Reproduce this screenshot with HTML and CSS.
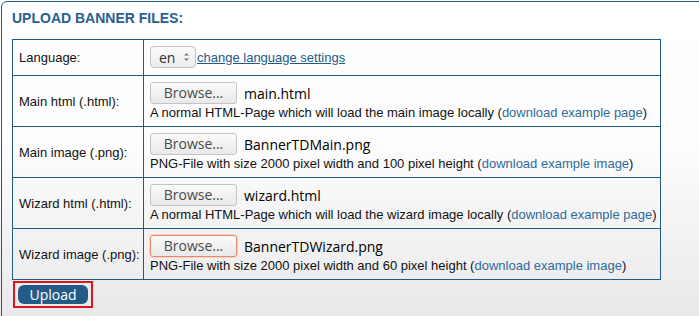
FILE: index.html
```html
<!DOCTYPE html>
<html lang="en">
<head>
  <meta charset="UTF-8" />
  <title>Upload Banner Files</title>
  <link rel="stylesheet" href="styles.css">
</head>
<body>
  <div class="panel">
    <h2 class="panel-title">UPLOAD BANNER FILES:</h2>
    <form id="uploadForm">
      <table class="upload-table">
        <colgroup>
          <col class="col-label">
          <col class="col-field">
        </colgroup>
        <tr class="row-lang">
          <td class="label">Language:</td>
          <td class="field">
            <div class="lang-line">
              <span class="lang-select">en
                <svg class="spin" width="7" height="12" viewBox="0 0 7 12">
                  <path d="M1 4.5 L3.5 2 L6 4.5 Z M1 7.5 L3.5 10 L6 7.5 Z" fill="#777"/>
                </svg>
              </span><a href="#" class="lang-link">change language settings</a>
            </div>
          </td>
        </tr>
        <tr>
          <td class="label">Main html (.html):</td>
          <td class="field">
            <div class="file-line"><button type="button" class="browse">Browse...</button><span class="file-name">main.html</span></div>
            <div class="hint">A normal HTML-Page which will load the main image locally (<a href="#">download example page</a>)</div>
          </td>
        </tr>
        <tr>
          <td class="label">Main image (.png):</td>
          <td class="field">
            <div class="file-line"><button type="button" class="browse">Browse...</button><span class="file-name">BannerTDMain.png</span></div>
            <div class="hint">PNG-File with size 2000 pixel width and 100 pixel height (<a href="#">download example image</a>)</div>
          </td>
        </tr>
        <tr>
          <td class="label">Wizard html (.html):</td>
          <td class="field">
            <div class="file-line"><button type="button" class="browse">Browse...</button><span class="file-name">wizard.html</span></div>
            <div class="hint">A normal HTML-Page which will load the wizard image locally (<a href="#">download example page</a>)</div>
          </td>
        </tr>
        <tr>
          <td class="label">Wizard image (.png):</td>
          <td class="field">
            <div class="file-line"><button type="button" class="browse focused">Browse...</button><span class="file-name">BannerTDWizard.png</span></div>
            <div class="hint">PNG-File with size 2000 pixel width and 60 pixel height (<a href="#">download example image</a>)</div>
          </td>
        </tr>
      </table>
      <div class="actions">
        <span class="highlight"><button type="submit" class="upload">Upload</button></span>
      </div>
    </form>
  </div>
</body>
</html>
```

FILE: styles.css
```css
html, body {
  margin: 0;
  height: 100%;
}

body {
  font-family: "Liberation Sans", Arial, sans-serif;
  font-size: 13px;
  color: #111;
  background: linear-gradient(#ffffff 0%, #fdfdfd 45%, #e9e9eb 100%);
  overflow: hidden;
}

.panel {
  margin: 1px 0 0 1px;
  width: 760px;
  height: 400px;
  border: 1px solid #1f5a8a;
  border-radius: 6px 0 0 0;
  padding: 8px 0 0 10px;
  box-sizing: border-box;
}

.panel-title {
  margin: 0 0 12px;
  font-size: 14px;
  font-weight: bold;
  color: #2a5f8f;
  line-height: 17px;
}

.upload-table {
  border-collapse: collapse;
  table-layout: fixed;
  width: 649px;
}

.col-label {
  width: 131px;
}

.upload-table td {
  border: 1px solid #1f5a8a;
  padding: 6px 6px;
  vertical-align: middle;
  white-space: nowrap;
}

.row-lang td {
  padding-top: 6px;
  padding-bottom: 7px;
}

.lang-line {
  display: flex;
  align-items: center;
  height: 22px;
}

.lang-select {
  display: inline-flex;
  align-items: center;
  justify-content: space-between;
  box-sizing: border-box;
  width: 46px;
  height: 22px;
  padding: 0 5px 0 8px;
  border: 1px solid #c3c3c3;
  border-radius: 4px;
  background: linear-gradient(#fbfbfb, #ececec);
  font-family: "Open Sans", sans-serif;
  font-size: 14px;
  color: #333;
}

.lang-link {
  margin-left: 1px;
  color: #1f5a8a;
  text-decoration: underline;
}

.file-line {
  display: flex;
  align-items: center;
  height: 22px;
}

.browse {
  box-sizing: border-box;
  width: 87px;
  height: 22px;
  margin: 0;
  padding: 0;
  border: 1px solid #c4c4c4;
  border-radius: 3px;
  background: linear-gradient(#fafafa, #e9e9e9);
  font-family: "Open Sans", sans-serif;
  font-size: 14px;
  line-height: 20px;
  color: #4a4a4a;
}

.browse.focused {
  border-color: #e9896a;
  box-shadow: 0 0 0 1px #f7d3c5;
}

.file-name {
  margin-left: 7px;
  font-family: "Open Sans", sans-serif;
  font-size: 14px;
  color: #000;
}

.hint {
  margin-top: 1px;
  line-height: 15px;
}

.hint a {
  color: #2f6a9b;
  text-decoration: none;
}

.actions {
  padding-top: 1px;
  margin-left: 1px;
}

.highlight {
  display: inline-block;
  border: 2px solid #e0151b;
  padding: 2px 3px 2px 3px;
}

.upload {
  display: block;
  width: 70px;
  height: 19px;
  margin: 0;
  padding: 0;
  border: none;
  border-radius: 6px;
  background: #235a86;
  color: #fff;
  font-family: "Open Sans", sans-serif;
  font-size: 14px;
  line-height: 19px;
}
```
